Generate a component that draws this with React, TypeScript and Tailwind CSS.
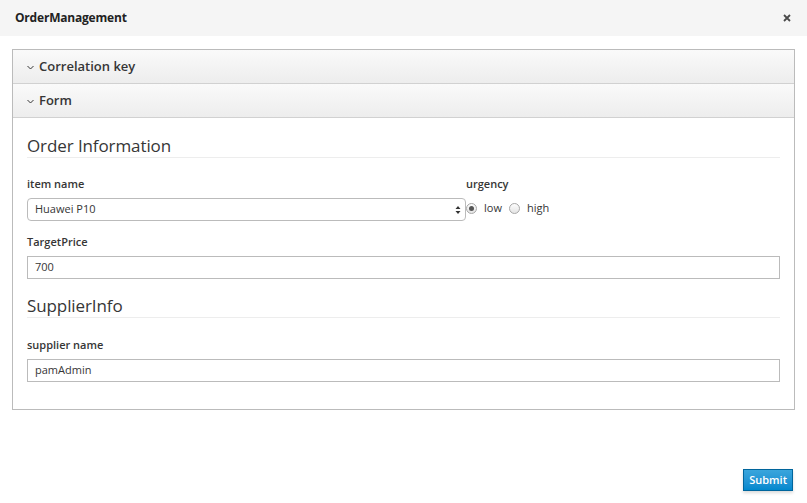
const font = { fontFamily: '"Open Sans", "Noto Sans", sans-serif' };

function PanelHeading({ title }: { title: string }) {
  return (
    <div className="flex h-[34px] items-center gap-[5px] border-b border-[#d1d1d1] bg-gradient-to-b from-[#fafafa] to-[#ededed] px-[14px]">
      <svg width="7" height="5" viewBox="0 0 7 5" className="mt-[1px]">
        <path d="M0.5 1 L3.5 4 L6.5 1" fill="none" stroke="#363636" strokeWidth="1" />
      </svg>
      <span className="text-[13px] font-semibold text-[#363636]">{title}</span>
    </div>
  );
}

function SectionTitle({ children }: { children: string }) {
  return (
    <div className="border-b border-[#ededed] text-[17px] leading-[23px] tracking-[-0.1px] text-[#363636]">
      {children}
    </div>
  );
}

function Label({ children }: { children: string }) {
  return <div className="mb-[6px] text-[11px] font-semibold leading-[16px] text-[#363636]">{children}</div>;
}

function Radio({ checked, label }: { checked?: boolean; label: string }) {
  return (
    <div className="flex items-center gap-[7px]">
      <span className="flex h-[11px] w-[11px] items-center justify-center rounded-full border border-[#a8a8a8] bg-gradient-to-b from-[#fdfdfd] to-[#e4e4e4]">
        {checked && <span className="h-[5px] w-[5px] rounded-full bg-[#555]" />}
      </span>
      <span className="text-[11px] text-[#363636]">{label}</span>
    </div>
  );
}

export default function App() {
  return (
    <div className="h-[503px] w-[807px] bg-white" style={font}>
      {/* Header */}
      <div className="flex h-[36px] items-center justify-between bg-[#f5f5f5] pl-[15px] pr-[16px]">
        <span className="text-[12px] font-bold tracking-[-0.2px] text-[#222]">OrderManagement</span>
        <svg width="8" height="8" viewBox="0 0 8 8">
          <path d="M1 1 L7 7 M7 1 L1 7" stroke="#4a4a4a" strokeWidth="1.8" />
        </svg>
      </div>

      <div className="px-[12px] pt-[13px]">
        <div className="border border-[#bbb]">
          <PanelHeading title="Correlation key" />
          <PanelHeading title="Form" />

          <div className="px-[14px] pb-[27px] pt-[16px]">
            <SectionTitle>Order Information</SectionTitle>

            <div className="mt-[18px] flex">
              <div className="w-[439px]">
                <Label>item name</Label>
                <div className="flex h-[23px] items-center justify-between rounded-[4px] border border-[#bbb] bg-white pl-[7px] pr-[4px]">
                  <span className="text-[11px] text-[#363636]">Huawei P10</span>
                  <svg width="6" height="10" viewBox="0 0 6 10">
                    <path d="M0.5 4 L3 1 L5.5 4 Z M0.5 6 L3 9 L5.5 6 Z" fill="#333" />
                  </svg>
                </div>
              </div>
              <div>
                <Label>urgency</Label>
                <div className="flex items-center gap-[7px] pt-[2px]">
                  <Radio checked label="low" />
                  <Radio label="high" />
                </div>
              </div>
            </div>

            <div className="mt-[13px]">
              <Label>TargetPrice</Label>
              <div className="flex h-[23px] items-center border border-[#bbb] bg-white px-[7px]">
                <span className="text-[11px] text-[#363636]">700</span>
              </div>
            </div>

            <div className="mt-[15px]">
              <SectionTitle>SupplierInfo</SectionTitle>
            </div>

            <div className="mt-[19px]">
              <Label>supplier name</Label>
              <div className="flex h-[23px] items-center border border-[#bbb] bg-white px-[7px]">
                <span className="text-[11px] text-[#363636]">pamAdmin</span>
              </div>
            </div>
          </div>
        </div>
      </div>

      <div className="flex justify-end pr-[14px] pt-[59px]">
        <button className="h-[22px] border border-[#00659c] bg-gradient-to-b from-[#39a5dc] to-[#0088ce] px-[5px] text-[11px] font-semibold text-white shadow-[0_2px_3px_rgba(0,0,0,0.15)]">
          Submit
        </button>
      </div>
    </div>
  );
}
